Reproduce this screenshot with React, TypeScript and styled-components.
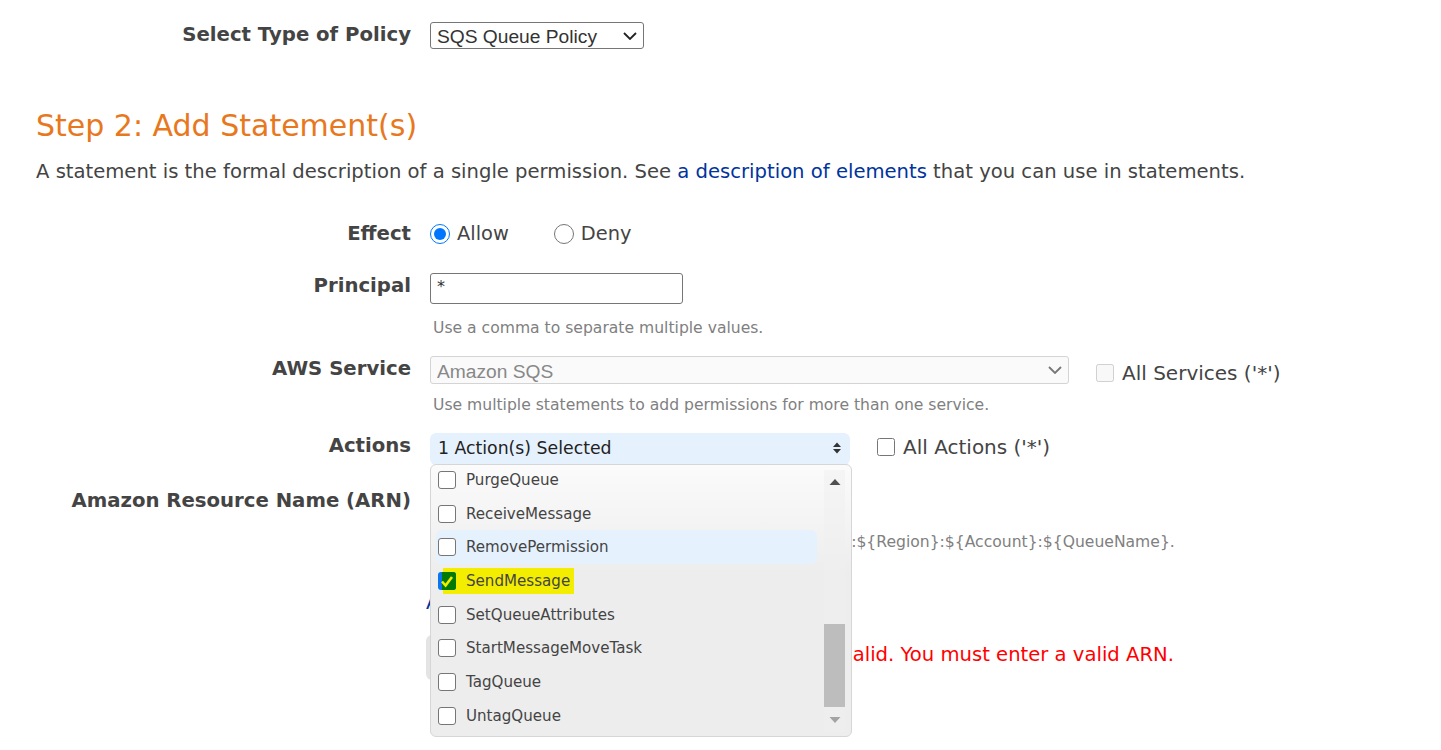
import React from 'react';
import styled, { createGlobalStyle } from 'styled-components';

const GlobalStyle = createGlobalStyle`
    html, body {
        margin: 0;
        padding: 0;
        background: #fff;
        overflow: hidden;
    }
    body {
        font-family: 'DejaVu Sans', Verdana, sans-serif;
        color: #444;
    }
`;

const ACTIONS = [
    'PurgeQueue',
    'ReceiveMessage',
    'RemovePermission',
    'SendMessage',
    'SetQueueAttributes',
    'StartMessageMoveTask',
    'TagQueue',
    'UntagQueue',
];

const App: React.FC = () => {
    return (
        <Page>
            <GlobalStyle />
            <PolicyRow>
                <Label>Select Type of Policy</Label>
                <SelectWrap>
                    <PolicySelect defaultValue="sqs">
                        <option value="sqs">SQS Queue Policy</option>
                    </PolicySelect>
                    <Chevron viewBox="0 0 14 8" stroke="#222">
                        <path d="M1 1l6 6 6-6" />
                    </Chevron>
                </SelectWrap>
            </PolicyRow>
            <Heading>Step 2: Add Statement(s)</Heading>
            <Intro>
                A statement is the formal description of a single permission. See{' '}
                <Link href="#">a description of elements</Link> that you can use in statements.
            </Intro>
            <Row height={40} top={37}>
                <Label>Effect</Label>
                <RadioGroup>
                    <RadioLabel>
                        <Radio name="effect" defaultChecked />
                        Allow
                    </RadioLabel>
                    <RadioLabel>
                        <Radio name="effect" />
                        Deny
                    </RadioLabel>
                </RadioGroup>
            </Row>
            <Row height={31} top={12}>
                <Label>Principal</Label>
                <TextInput defaultValue="*" />
            </Row>
            <Hint top={14}>Use a comma to separate multiple values.</Hint>
            <Row height={28} top={18}>
                <Label>AWS Service</Label>
                <SelectWrap>
                    <ServiceSelect disabled defaultValue="sqs">
                        <option value="sqs">Amazon SQS</option>
                    </ServiceSelect>
                    <Chevron viewBox="0 0 14 8" stroke="#777">
                        <path d="M1 1l6 6 6-6" />
                    </Chevron>
                </SelectWrap>
                <CheckLabel lift={-1}>
                    <Checkbox disabled />
                    All Services ('*')
                </CheckLabel>
            </Row>
            <Hint top={11}>Use multiple statements to add permissions for more than one service.</Hint>
            <ActionsRow>
                <Label>Actions</Label>
                <ActionsControl>
                    <ActionsButton>
                        1 Action(s) Selected
                        <svg width="10" height="14" viewBox="0 0 10 14">
                            <path d="M5 1.5 9 6H1zM5 12.5 1 8h8z" fill="#333" />
                        </svg>
                    </ActionsButton>
                    <ActionsMenu>
                        <ActionsList>
                            {ACTIONS.map((action) => (
                                <ActionItem key={action} hovered={action === 'RemovePermission'}>
                                    {action === 'SendMessage' ? (
                                        <>
                                            <CheckedBox viewBox="0 0 18 18">
                                                <rect width="18" height="18" rx="3" fill="#0a75f0" />
                                                <path d="M4 0h11a3 3 0 0 1 3 3v12a3 3 0 0 1-3 3H4z" fill="#027a04" />
                                                <path
                                                    d="M4 9.500 7.600 13.500 14 5"
                                                    fill="none"
                                                    stroke="#f3ee00"
                                                    strokeWidth="2.6"
                                                />
                                            </CheckedBox>
                                            <Highlighted>{action}</Highlighted>
                                        </>
                                    ) : (
                                        <>
                                            <ItemBox />
                                            {action}
                                        </>
                                    )}
                                </ActionItem>
                            ))}
                        </ActionsList>
                        <Scrollbar>
                            <svg width="12" height="8" viewBox="0 0 12 8">
                                <path d="M6 1 11.500 7H.5z" fill="#505050" />
                            </svg>
                            <ScrollThumb />
                            <svg width="12" height="8" viewBox="0 0 12 8">
                                <path d="M6 7 .5 1h11z" fill="#a3a3a3" />
                            </svg>
                        </Scrollbar>
                    </ActionsMenu>
                </ActionsControl>
                <CheckLabel lift={2}>
                    <Checkbox />
                    All Actions ('*')
                </CheckLabel>
            </ActionsRow>
            <Row height={30} top={23}>
                <Label>Amazon Resource Name (ARN)</Label>
            </Row>
            <ArnHint>ARN should follow the following format: arn:aws:sqs:{'${Region}:${Account}:${QueueName}'}.</ArnHint>
            <ConditionsLink href="#">Add Conditions (Optional)</ConditionsLink>
            <SubmitRow>
                <SubmitButton>Add Statement</SubmitButton>
                <ErrorText>The ARN you entered is invalid. You must enter a valid ARN.</ErrorText>
            </SubmitRow>
        </Page>
    );
};

const Page = styled.div`
    position: relative;
    width: 1441px;
    height: 750px;
    overflow: hidden;
    padding-left: 36px;
    box-sizing: border-box;
    display: flex;
    flex-direction: column;
`;

const Row = styled.div<{ height: number; top: number }>`
    display: flex;
    align-items: flex-start;
    flex: none;
    height: ${(props) => props.height}px;
    margin-top: ${(props) => props.top}px;
`;

const PolicyRow = styled.div`
    display: flex;
    align-items: flex-start;
    flex: none;
    box-sizing: border-box;
    height: 70px;
    padding-top: 22px;
`;

const Label = styled.div`
    flex: none;
    width: 375px;
    margin-right: 19px;
    padding-top: 1px;
    text-align: right;
    font-size: 19.7px;
    line-height: 24px;
    font-weight: 700;
    color: #444;
    white-space: nowrap;
`;

const SelectWrap = styled.div`
    position: relative;
    flex: none;
    display: flex;
`;

const Chevron = styled.svg<{ stroke: string }>`
    position: absolute;
    right: 7px;
    top: 50%;
    width: 14px;
    height: 8px;
    margin-top: -4px;
    fill: none;
    stroke-width: 1.8;
    pointer-events: none;
`;

const PolicySelect = styled.select`
    appearance: none;
    margin: 0;
    width: 214px;
    height: 27px;
    padding: 2px 0 0 6px;
    background: #fff;
    border: 1px solid #767676;
    border-radius: 3px;
    font-family: 'Liberation Sans', Arial, sans-serif;
    font-size: 19.2px;
    color: #333;
`;

const Heading = styled.h2`
    flex: none;
    margin: 35px 0 0 0;
    font-size: 30px;
    line-height: 42px;
    font-weight: 400;
    color: #e8781e;
`;

const Intro = styled.p`
    flex: none;
    margin: 13px 0 0 0;
    font-size: 19.6px;
    line-height: 24px;
    color: #444;
    white-space: nowrap;
`;

const Link = styled.a`
    color: #00339c;
    text-decoration: none;
`;

const RadioGroup = styled.div`
    display: flex;
    gap: 45px;
`;

const RadioLabel = styled.label`
    display: flex;
    align-items: center;
    gap: 7px;
    margin-top: 1px;
    font-size: 19.4px;
    line-height: 24px;
    color: #444;
`;

const Radio = styled.input.attrs({ type: 'radio' })`
    width: 20px;
    height: 20px;
    margin: 0;
`;

const TextInput = styled.input`
    width: 253px;
    height: 31px;
    padding: 0 6px 4px;
    box-sizing: border-box;
    border: 1px solid #767676;
    border-radius: 3px;
    font-family: 'DejaVu Sans', sans-serif;
    font-size: 16px;
    color: #333;
`;

const Hint = styled.div<{ top: number }>`
    flex: none;
    margin: ${(props) => props.top}px 0 0 397px;
    font-size: 15.6px;
    line-height: 20px;
    color: #808080;
    white-space: nowrap;
`;

const ArnHint = styled.div`
    flex: none;
    margin: 14px 0 0 409px;
    font-size: 15.6px;
    line-height: 20px;
    color: #808080;
    white-space: nowrap;
`;

const ServiceSelect = styled.select`
    appearance: none;
    width: 639px;
    height: 28px;
    padding: 2px 0 0 6px;
    background: #fafafa;
    border: 1px solid #d4d4d4;
    border-radius: 3px;
    font-family: 'Liberation Sans', Arial, sans-serif;
    font-size: 19.2px;
    color: #888;
    opacity: 1;
`;

const CheckLabel = styled.label<{ lift: number }>`
    display: flex;
    align-items: center;
    gap: 8px;
    margin: ${(props) => -props.lift}px 0 0 27px;
    height: 32px;
    font-size: 20px;
    color: #444;
`;

const Checkbox = styled.input.attrs({ type: 'checkbox' })`
    width: 18px;
    height: 18px;
    margin: 0;
`;

const ActionsRow = styled.div`
    display: flex;
    align-items: flex-start;
    flex: none;
    height: 32px;
    margin-top: 18px;
`;

const ActionsControl = styled.div`
    position: relative;
    width: 420px;
    height: 32px;
`;

const ActionsButton = styled.div`
    display: flex;
    align-items: center;
    justify-content: space-between;
    height: 30px;
    box-sizing: content-box;
    padding: 0 8px 2px;
    background: #e6f1fe;
    border-radius: 6px;
    font-size: 17.3px;
    color: #222;
`;

const ActionsMenu = styled.div`
    position: absolute;
    z-index: 2;
    top: 31px;
    left: 0;
    width: 422px;
    height: 273px;
    box-sizing: border-box;
    background: linear-gradient(#fbfbfb 0%, #ededed 40%, #ededed 100%);
    border: 1px solid #d6d6d6;
    border-radius: 6px;
    display: flex;
    overflow: hidden;
`;

const ActionsList = styled.div`
    flex: none;
    width: 388px;
    margin-top: -2px;
    padding: 0 0 0 5px;
`;

const ActionItem = styled.div<{ hovered?: boolean }>`
    display: flex;
    align-items: center;
    gap: 10px;
    height: 33.7px;
    width: 381px;
    padding-left: 2px;
    box-sizing: border-box;
    border-radius: 6px;
    font-size: 15.1px;
    color: #444;
    background: ${(props) => (props.hovered ? '#e6f1fe' : 'transparent')};
`;

const ItemBox = styled.span`
    flex: none;
    width: 18px;
    height: 18px;
    box-sizing: border-box;
    background: #fff;
    border: 1px solid #767676;
    border-radius: 3px;
`;

const CheckedBox = styled.svg`
    flex: none;
    width: 18px;
    height: 18px;
`;

const Highlighted = styled.span`
    margin-left: -23px;
    padding: 4px 4px 4px 23px;
    background: #f3ee00;
    position: relative;
    z-index: -1;
`;

const Scrollbar = styled.div`
    flex: none;
    width: 21px;
    margin: 5px 0 4px 0;
    background: rgba(240, 240, 240, 0.5);
    display: flex;
    flex-direction: column;
    align-items: center;
    justify-content: space-between;
    padding: 8px 0;
    box-sizing: border-box;
    position: relative;
`;

const ScrollThumb = styled.div`
    position: absolute;
    left: 0;
    right: 0;
    bottom: 25px;
    height: 83px;
    background: #bdbdbd;
`;

const ConditionsLink = styled.a`
    flex: none;
    margin: 39px 0 0 390px;
    font-size: 19.6px;
    line-height: 24px;
    color: #00339c;
    text-decoration: none;
`;

const SubmitRow = styled.div`
    flex: none;
    display: flex;
    align-items: center;
    margin: 20px 0 0 390px;
    height: 45px;
`;

const SubmitButton = styled.button`
    width: 180px;
    height: 45px;
    border: none;
    border-radius: 6px;
    background: #e4e4e4;
    font-family: inherit;
    font-size: 16px;
    color: #444;
`;

const ErrorText = styled.span`
    margin: -6px 0 0 -20px;
    font-size: 19.6px;
    color: #f00;
    white-space: nowrap;
`;

export default App;
